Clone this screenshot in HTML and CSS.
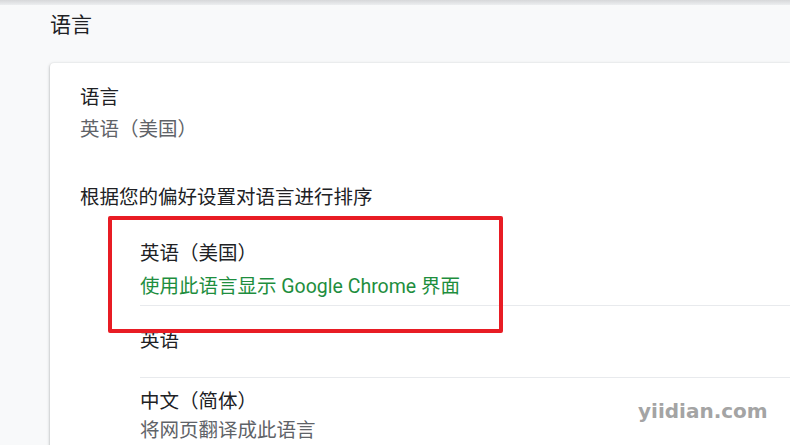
FILE: index.html
```html
<!DOCTYPE html>
<html lang="zh-CN">
<head>
  <meta charset="UTF-8">
  <meta name="viewport" content="width=device-width, initial-scale=1.0">
  <title>语言设置</title>
  <link rel="stylesheet" href="styles.css">
</head>
<body>
  <div class="toolbar-shadow"></div>
  <main class="page">
    <h2 class="section-title">语言</h2>
    <section class="card">
      <div class="setting-row">
        <div class="label">语言</div>
        <div class="secondary">英语（美国）</div>
      </div>
      <div class="order-title">根据您的偏好设置对语言进行排序</div>
      <ul class="lang-list">
        <li class="lang-item first">
          <div class="label">英语（美国）</div>
          <div class="ui-note">使用此语言显示 Google Chrome 界面</div>
        </li>
        <li class="lang-item single">
          <div class="label">英语</div>
        </li>
        <li class="lang-item last">
          <div class="label">中文（简体）</div>
          <div class="secondary tight">将网页翻译成此语言</div>
        </li>
      </ul>
    </section>
  </main>
  <div class="highlight-box"></div>
  <div class="watermark">yiidian.com</div>
</body>
</html>
```

FILE: styles.css
```css
:root {
  --bg: #f8f9fa;
  --card-bg: #ffffff;
  --text: #202124;
  --text-secondary: #5f6368;
  --divider: #e8eaed;
  --green: #1e8e3e;
  --mark: #e81c24;
}
* { box-sizing: border-box; }
html, body {
  height: 100%;
}
body {
  margin: 0;
  overflow: hidden;
  background-color: var(--bg);
  color: var(--text);
  font-family: Roboto, "Noto Sans CJK SC", sans-serif;
  font-size: 19.5px;
  line-height: 30px;
}
.toolbar-shadow {
  height: 5px;
  background: linear-gradient(#d6d7d9, #eceef0);
}
.page {
  padding-left: 50px;
}
.section-title {
  margin: 5px 0 23px;
  font-size: 21px;
  font-weight: normal;
  line-height: 30px;
}
.card {
  padding: 20px 0 0 30px;
  background: var(--card-bg);
  border-radius: 4px 0 0 4px;
  box-shadow: 0 1px 2px rgba(60,64,67,0.3), 0 1px 3px 1px rgba(60,64,67,0.15);
  clip-path: inset(-10px 0 -10px -10px);
  min-height: 400px;
}
.label {
  color: var(--text);
}
.secondary {
  margin-top: 2px;
  color: var(--text-secondary);
}
.secondary.tight {
  margin-top: -1px;
  line-height: 29px;
}
.order-title {
  margin-top: 38px;
}
.lang-list {
  list-style: none;
  margin: 0 0 0 60px;
  padding: 0;
}
.lang-item {
  border-bottom: 1px solid var(--divider);
}
.lang-item.first {
  padding: 26px 0 3px;
}
.lang-item.single {
  padding: 20px 0 21px;
}
.lang-item.last {
  padding-top: 9px;
  border-bottom: none;
}
.ui-note {
  margin-top: 3px;
  color: var(--green);
}
.highlight-box {
  position: absolute;
  left: 108px;
  top: 216px;
  width: 395px;
  height: 117px;
  border: 4px solid var(--mark);
  border-radius: 2px;
}
.watermark {
  position: absolute;
  left: 638px;
  top: 399px;
  font-family: "DejaVu Sans", sans-serif;
  font-size: 20px;
  font-weight: bold;
  line-height: 24px;
  color: #a4a4a4;
}
```
